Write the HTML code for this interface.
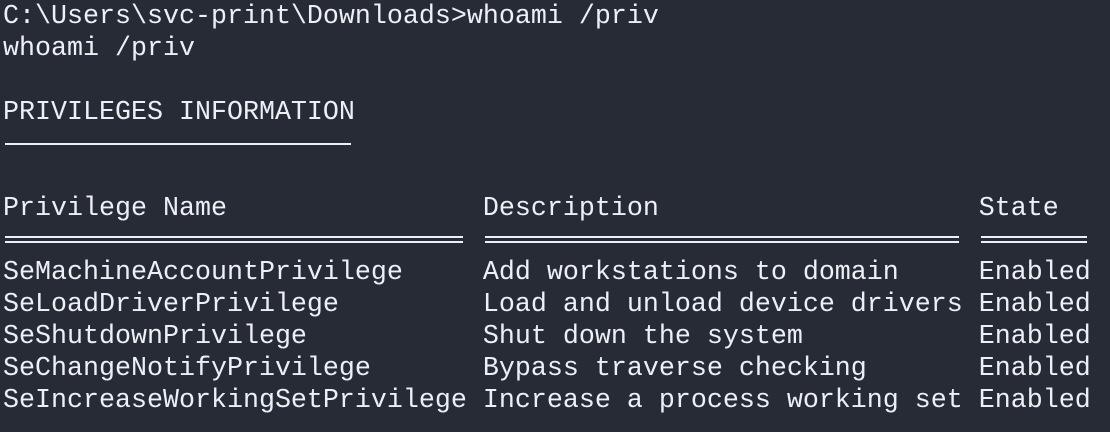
<!DOCTYPE html>
<html><head><meta charset="utf-8"><style>
html,body{margin:0;padding:0;width:1110px;height:432px;background:#262b36;overflow:hidden}
.t{position:absolute;left:3px;font-family:"Liberation Mono","DejaVu Sans Mono",monospace;font-size:26.67px;line-height:32px;color:#eceff4;white-space:pre}
.l{position:absolute;background:#eceff4;height:2px}
</style></head><body>
<div class="t" style="top:1px">C:\Users\svc-print\Downloads&gt;whoami /priv
whoami /priv

PRIVILEGES INFORMATION


Privilege Name                Description                    State

SeMachineAccountPrivilege     Add workstations to domain     Enabled
SeLoadDriverPrivilege         Load and unload device drivers Enabled
SeShutdownPrivilege           Shut down the system           Enabled
SeChangeNotifyPrivilege       Bypass traverse checking       Enabled
SeIncreaseWorkingSetPrivilege Increase a process working set Enabled</div>
<div class="l" style="left:5px;width:346px;top:143px"></div>
<div class="l" style="left:5px;width:458px;top:236px"></div>
<div class="l" style="left:5px;width:458px;top:241px"></div>
<div class="l" style="left:485px;width:474px;top:236px"></div>
<div class="l" style="left:485px;width:474px;top:241px"></div>
<div class="l" style="left:981px;width:106px;top:236px"></div>
<div class="l" style="left:981px;width:106px;top:241px"></div>
</body></html>
